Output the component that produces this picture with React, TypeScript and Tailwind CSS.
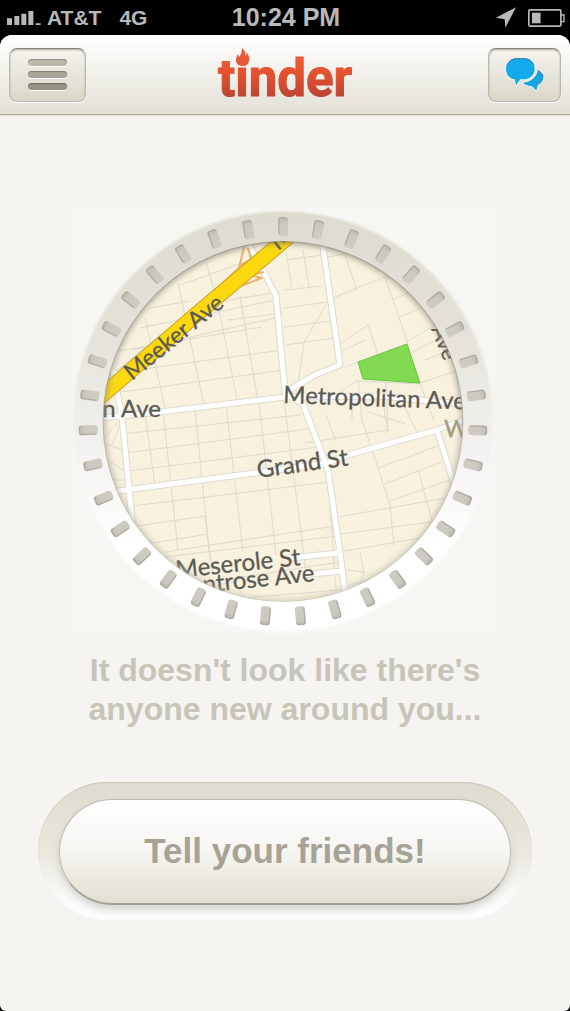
const TICK_COUNT = 35;
const ticks = Array.from({ length: TICK_COUNT }, (_, i) => (i * 360) / TICK_COUNT);

const minorStreets = [
    "M112 352 L262 327", "M122 372 L282 350", "M132 350 L275 318", "M140 328 L276 300", "M150 308 L190 301",
    "M180 285 L245 262", "M122 392 L284 370", "M222 301 L280 292", "M228 320 L282 313",
    "M145 317 L165 408", "M178 283 L204 405", "M206 262 L217 300 L238 404", "M240 296 L258 402",
    "M285 290 L322 286", "M284 308 L328 302", "M284 327 L332 321", "M286 345 L334 338", "M286 260 L322 255",
    "M286 252 L292 288", "M303 250 L309 287", "M326 257 L375 250", "M328 300 L385 277 L415 270",
    "M345 255 L357 290", "M385 277 L408 344", "M392 300 L425 286", "M398 318 L440 300", "M406 342 L445 320",
    "M338 345 L368 325 L378 355", "M340 352 L366 340", "M345 367 L358 362", "M420 383 L465 368",
    "M326 305 L304 342 L298 384", "M420 383 L434 421", "M358 380 L362 421", "M386 381 L388 432",
    "M340 392 L356 381 L420 384", "M425 360 L455 348", "M412 352 L440 338",
    "M122 434 L300 415", "M126 453 L315 428", "M129 471 L318 447", "M132 506 L330 482", "M137 526 L205 516",
    "M140 545 L208 534", "M148 559 L338 536", "M165 552 L335 526", "M190 585 L340 562",
    "M145 413 L155 486", "M163 411 L178 550", "M195 408 L210 560", "M226 405 L243 552", "M259 402 L276 555",
    "M284 400 L307 580", "M205 516 L213 575", "M240 590 L246 601", "M330 505 L336 590",
    "M305 443 L388 430", "M388 432 L384 408", "M326 415 L336 441", "M362 420 L372 450 L390 505 L394 546",
    "M379 468 L440 445", "M384 484 L450 459", "M390 501 L455 478", "M418 470 L434 528",
    "M338 517 L446 498", "M341 534 L432 522", "M345 551 L420 538", "M360 552 L364 572 L360 584", "M347 570 L364 572",
    "M103 440 L117 423", "M104 443 L122 450", "M107 460 L126 472", "M112 480 L128 480", "M345 587 L372 578",
    "M182 593 L240 580", "M218 600 L340 590", "M150 540 L158 575", "M352 395 L352 421", "M404 406 L418 434",
    "M368 412 L406 424", "M122 420 L112 445",
];

const mainStreets = [
    "M246 240 L262 268 L276 296 L285 392 L303 404 L328 470 L340 553 L346 600",
    "M322 240 L340 365 L315 375 L288 391",
    "M100 418 L160 412 L285 397 L380 396 L470 405",
    "M110 492 L255 473 L328 463 L348 455 L437 430 L470 418",
    "M437 430 L456 490",
    "M113 370 L122 417 L133 530",
    "M290 558 L339 553",
    "M300 575 L343 571",
    "M100 388 L192 314",
    "M458 360 L462 395",
];

const SignalIcon = () => (
    <svg viewBox="0 0 102 42" className="h-[14px] w-[34px]" fill="#b9b9b9" aria-hidden="true">
        <path d="M0 22h15v20H0zM22 15h15v27H22zM43 8h15v34H43zM64 0h15v42H64zM86 37h15v5H86z" />
    </svg>
);

const StatusBar = () => (
    <div className="grid h-[35px] grid-cols-3 items-center pl-[7px] pr-[5px] text-[#b9b9b9]">
        <div className="flex items-center gap-x-[6px] whitespace-nowrap text-[21px] font-bold">
            <SignalIcon />
            <span>AT&amp;T</span>
            <span className="pl-3">4G</span>
        </div>
        <div className="whitespace-nowrap text-center text-[25px] font-bold leading-none">10:24 PM</div>
        <div className="flex items-center justify-end gap-x-3">
            <svg viewBox="0 0 60 62" className="h-[21px] w-5" fill="#b9b9b9" aria-hidden="true">
                <path d="M60 0 28 62 26 36 0 32z" />
            </svg>
            <svg viewBox="0 0 112 54" className="h-[18px] w-[37px]" aria-hidden="true">
                <rect x="2.5" y="2.5" width="97" height="49" rx="3" fill="none" stroke="#b9b9b9" strokeWidth="5" />
                <rect x="12" y="11" width="26" height="32" fill="#b9b9b9" />
                <path d="M100 18h9v20h-9" fill="none" stroke="#b9b9b9" strokeWidth="4" />
            </svg>
        </div>
    </div>
);

const Logo = () => (
    <svg viewBox="0 0 140 56" className="h-14 w-[140px]" role="img" aria-label="tinder">
        <defs>
            <linearGradient id="logo-fill" gradientUnits="userSpaceOnUse" x1="0" y1="4" x2="0" y2="52">
                <stop offset="0" stopColor="#f05f3c" />
                <stop offset="0.5" stopColor="#e2502f" />
                <stop offset="1" stopColor="#b94335" />
            </linearGradient>
        </defs>
        <text
            x="1"
            y="49"
            fontFamily="Roboto, sans-serif"
            fontSize="51"
            fontWeight="700"
            fill="url(#logo-fill)"
            stroke="url(#logo-fill)"
            strokeWidth="1"
        >
            tinder
        </text>
        <path
            d="M25 1c3 3 4 5 3 8 1-1 2-2 1-4 3 3 4 6 3 9-1 4-3 5-6 5-4 0-7-2-7-6 0-3 1-4 2-6l1 3c2-2 3-5 3-9z"
            fill="#e75a38"
        />
    </svg>
);

const ChatIcon = () => (
    <svg viewBox="375 178 120 105" className="h-[35px] w-10" aria-hidden="true">
        <path
            d="M473 216c11 4 18 13 18 24 0 10-6 17-16 22l-5 19-14-14c-15 0-25-6-30-14 20 2 42-12 47-37z"
            fill="#14a5e0"
            stroke="#f7f6ef"
            strokeWidth="3"
        />
        <path
            d="M408 180h28c18 0 31 14 31 33 0 20-13 35-31 35h-12l-18 19-3-19c-16-2-27-15-27-33 0-20 14-35 32-35z"
            fill="#f7f6ef"
        />
        <path
            d="M410 182h22c19 0 32 13 32 31s-13 32-32 32h-11l-13 18-4-18c-15-1-26-14-26-31 0-18 14-32 32-32z"
            fill="#12aaeb"
        />
        <path d="M381 204c4-13 15-21 29-21h22c14 0 25 7 30 19" fill="none" stroke="#35839f" strokeWidth="3" />
        <path d="M473 218c9 4 15 11 16 20" fill="none" stroke="#35839f" strokeWidth="3" />
    </svg>
);

const navButton =
    "flex h-[54px] items-center justify-center rounded-lg border border-[#bab8ae] border-t-[#85837b] bg-linear-to-b from-[#f5f4ef] to-[#dad7c9] shadow-[0_1px_1px_#ffffff,inset_0_1px_2px_#a9a79e]";

const NavBar = () => (
    <header className="flex h-20 items-center justify-between rounded-t-xl border-b border-[#aaa9a2] bg-linear-to-b from-white to-[#e3e1d6] px-[9px] shadow-[0_1px_1px_#e4e3dc]">
        <button type="button" aria-label="Menu" className={`${navButton} w-[77px] flex-col gap-y-[5px]`}>
            <span className="h-[7px] w-[39px] rounded-full bg-[#bab8ab] shadow-[0_1px_0_#ffffff,inset_0_1px_1px_#8f8d82]" />
            <span className="h-[7px] w-[39px] rounded-full bg-[#a8a598] shadow-[0_1px_0_#ffffff,inset_0_1px_1px_#827f73]" />
            <span className="h-[7px] w-[39px] rounded-full bg-[#969284] shadow-[0_1px_0_#ffffff,inset_0_1px_1px_#706c60]" />
        </button>
        <Logo />
        <button type="button" aria-label="Messages" className={`${navButton} w-[73px]`}>
            <ChatIcon />
        </button>
    </header>
);

const MapLabels = () => (
    <g fontFamily="Lato, sans-serif" fontSize="24" fill="#5b5953" stroke="#5b5953" strokeWidth="0.3">
        <text transform="translate(132 381) rotate(-39)" fontSize="23">Meeker Ave</text>
        <text transform="translate(278 251) rotate(-39)" fontSize="23">M</text>
        <text x="161" y="417" textAnchor="end">n Ave</text>
        <text transform="translate(283 403) rotate(2)">Metropolitan Ave</text>
        <text transform="translate(258 478) rotate(-8)">Grand St</text>
        <text transform="translate(301 565) rotate(-6)" textAnchor="end">Meserole St</text>
        <text transform="translate(315 581) rotate(-6)" textAnchor="end">ntrose Ave</text>
        <text transform="translate(431 329) rotate(68)" fontSize="21">Ave</text>
        <text x="444" y="437" fill="#a39b80" stroke="#a39b80">W</text>
    </g>
);

const Dial = () => (
    <svg viewBox="70 208 430 426" className="w-[430px] max-w-full" role="img" aria-label="Map of nearby streets">
        <defs>
            <linearGradient id="ring" x1="0" y1="0" x2="0" y2="1">
                <stop offset="0" stopColor="#dedbd0" />
                <stop offset="0.3" stopColor="#e4e2da" />
                <stop offset="0.6" stopColor="#f5f4f2" />
                <stop offset="0.8" stopColor="#ffffff" />
            </linearGradient>
            <linearGradient id="map-shade" x1="0" y1="0" x2="0" y2="1">
                <stop offset="0" stopColor="#6f6c60" />
                <stop offset="1" stopColor="#c0bcaa" />
            </linearGradient>
            <linearGradient id="tick" x1="0" y1="0" x2="0" y2="1">
                <stop offset="0" stopColor="#bdbbb2" />
                <stop offset="0.35" stopColor="#cbc9c0" />
                <stop offset="1" stopColor="#cecbc2" />
            </linearGradient>
            <filter id="soft" x="-10%" y="-10%" width="120%" height="120%">
                <feGaussianBlur stdDeviation="3" />
            </filter>
            <filter id="edge">
                <feGaussianBlur stdDeviation="1" />
            </filter>
            <clipPath id="map-clip">
                <circle cx="283" cy="421.5" r="180" />
            </clipPath>
        </defs>

        <rect x="70" y="208" width="425" height="426" fill="#f6f6f2" />
        <circle cx="283" cy="421.5" r="210" fill="url(#ring)" filter="url(#edge)" />

        <g clipPath="url(#map-clip)">
            <rect x="100" y="240" width="370" height="364" fill="#f7f1de" />
            <g fill="none" stroke="#dcdacf" strokeWidth="1">
                {minorStreets.map((d) => (
                    <path key={d} d={d} />
                ))}
            </g>
            <path d="M358 362 407 344 420 383 363 379z" fill="#82d952" stroke="#6cc142" />
            <g fill="none" strokeLinejoin="round">
                {mainStreets.map((d) => (
                    <path key={d} d={d} stroke="#dedbd0" strokeWidth="7" />
                ))}
                {mainStreets.map((d) => (
                    <path key={d} d={d} stroke="#ffffff" strokeWidth="5" />
                ))}
                <path
                    d="M244 247 239 268 212 293M248 248 252 262M240 266 252 258M234 288 250 275 264 272M232 289 262 278 250 275"
                    stroke="#efb169"
                    strokeWidth="2"
                />
                <path d="M92 404 198 313 300 227" stroke="#c9a227" strokeWidth="16" />
                <path d="M92 404 198 313 300 227" stroke="#fcd90f" strokeWidth="14" />
            </g>
            <MapLabels />
            <circle cx="283" cy="421.5" r="181" fill="none" stroke="url(#map-shade)" strokeWidth="4" filter="url(#soft)" />
        </g>
        <circle cx="283" cy="421.5" r="180" fill="none" stroke="url(#map-shade)" strokeWidth="1" opacity="0.5" />

        {ticks.map((angle) => (
            <g key={angle} transform={`rotate(${angle} 283 421.5)`}>
                <rect x="278" y="217" width="10" height="19" rx="3" fill="url(#tick)" />
                <path d="M279 234v-14q0-2 2-2h4q2 0 2 2" fill="none" stroke="#a9a79e" strokeWidth="1" />
            </g>
        ))}
    </svg>
);

export default function App() {
    return (
        <div className="min-h-screen bg-black font-['Liberation_Sans',Arial,sans-serif]">
            <StatusBar />
            <div className="flex min-h-[calc(100vh-35px)] flex-col rounded-t-xl rounded-b-md bg-[#f5f4f0]">
                <NavBar />
                <main className="flex flex-col items-center px-[38px] pt-[93px] pb-10">
                    <Dial />
                    <p className="pt-[17px] text-center text-[32px] font-bold leading-[39px] text-[#c7c5b9]">
                        It doesn't look like there's
                        <br />
                        anyone new around you...
                    </p>
                    <div className="mt-[53px] w-full rounded-full bg-linear-to-b from-[#dfdbd0] via-[#e9e7de] via-50% to-[#fcfcfb] to-90% px-[21px] pt-[17px] pb-[15px] shadow-[inset_0_1px_1px_#cbc8bd]">
                        <button
                            type="button"
                            className="h-[106px] w-full rounded-full border border-[#bdbbb0] border-b-2 border-b-[#a3a196] bg-linear-to-b from-white via-[#f6f5f1] to-[#e1dfd1] text-[35px] font-bold text-[#a6a396] shadow-[0_4px_8px_#cfceca]"
                        >
                            Tell your friends!
                        </button>
                    </div>
                </main>
            </div>
        </div>
    );
}
